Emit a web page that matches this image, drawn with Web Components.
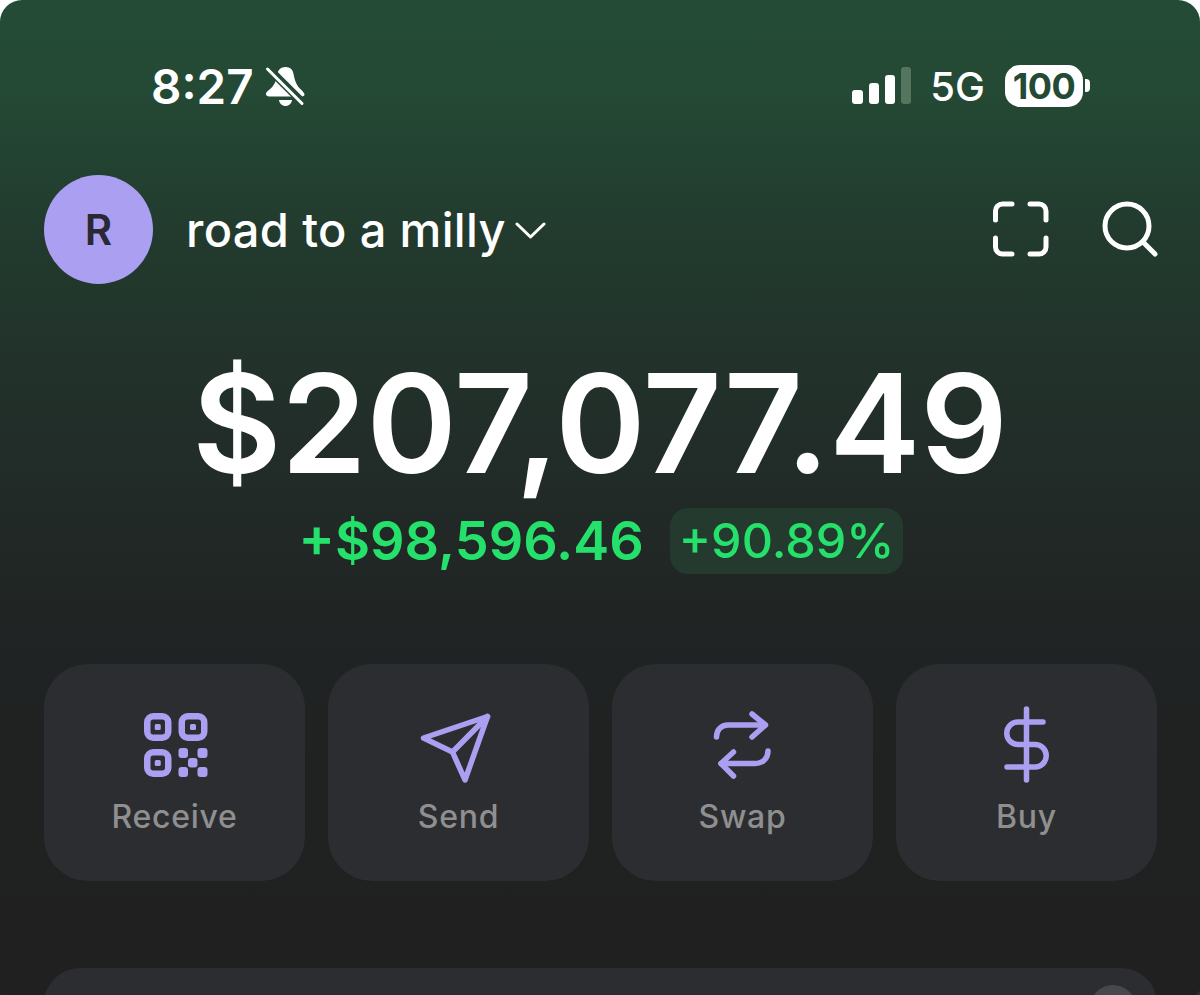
<!DOCTYPE html>
<html>
<head>
<meta charset="utf-8">
<title>road to a milly</title>
<style>
  html, body { margin: 0; padding: 0; background: #fff; }
  body { font-family: "Inter", "Liberation Sans", sans-serif; }
</style>
</head>
<body>
<wallet-screen>
  <status-bar time="8:27" network="5G" battery="100"></status-bar>
  <account-header name="road to a milly" initial="R"></account-header>
  <balance-summary total="$207,077.49" change="+$98,596.46" percent="+90.89%"></balance-summary>
  <action-row>
    <action-tile label="Receive">
      <svg slot="icon" width="80" height="80" viewBox="0 0 80 80" fill="none" stroke="currentColor" stroke-width="6.5">
        <rect x="12.25" y="11.25" width="21" height="21.5" rx="6"/>
        <rect x="46.75" y="11.25" width="22.5" height="21.5" rx="6"/>
        <rect x="12.25" y="47.25" width="21" height="21.5" rx="6"/>
        <g fill="currentColor" stroke="none">
          <rect x="19.75" y="19" width="6" height="6" rx="1.5"/>
          <rect x="55" y="19" width="6" height="6" rx="1.5"/>
          <rect x="19.75" y="55" width="6" height="6" rx="1.5"/>
          <rect x="43.5" y="43" width="9.5" height="10" rx="3"/>
          <rect x="62.5" y="43" width="10" height="10" rx="3"/>
          <rect x="53" y="53" width="9.5" height="9.5" rx="3"/>
          <rect x="43.5" y="62" width="9.5" height="10" rx="3"/>
          <rect x="62.5" y="62" width="10" height="10" rx="3"/>
        </g>
      </svg>
    </action-tile>
    <action-tile label="Send">
      <svg slot="icon" width="80" height="80" viewBox="0 0 80 80" fill="none" stroke="currentColor" stroke-width="5.5" stroke-linejoin="round" stroke-linecap="round">
        <path d="M68.500 11.500 4.500 33l29 14L46 75z"/>
        <path d="M33.500 47 68.500 11.500"/>
      </svg>
    </action-tile>
    <action-tile label="Swap">
      <svg slot="icon" width="80" height="80" viewBox="0 0 80 80" fill="none" stroke="currentColor" stroke-width="5.5" stroke-linejoin="round" stroke-linecap="round">
        <path d="M13.500 32C13.500 25 18 20 25 20H62"/>
        <path d="M49 9 62.500 20 49 32"/>
        <path d="M18 58.500H52C60 58.500 65 53 65 46"/>
        <path d="M30.500 47 18 58.500 30.500 71"/>
      </svg>
    </action-tile>
    <action-tile label="Buy">
      <svg slot="icon" width="80" height="80" viewBox="0 0 80 80" fill="none" stroke="currentColor" stroke-width="5.5" stroke-linejoin="round" stroke-linecap="round">
        <path d="M39.500 4V75"/>
        <path d="M56 17H31A11.250 11.250 0 0 0 31 39.500H48A11.250 11.250 0 0 1 48 62H20"/>
      </svg>
    </action-tile>
  </action-row>
  <peek-card></peek-card>
</wallet-screen>

<script>
class WalletScreen extends HTMLElement {
  constructor() {
    super();
    this.attachShadow({ mode: "open" });
    this.shadowRoot.innerHTML = `
      <style>
        :host {
          display: flex;
          flex-direction: column;
          width: 1200px;
          height: 995px;
          overflow: hidden;
          border-radius: 22px 22px 0 0;
          color: #fff;
          font-family: "Inter", "Liberation Sans", sans-serif;
          background: linear-gradient(180deg, #244b36 0, #244a35 80px, #223b2e 230px, #222e29 420px, #212826 540px, #202323 660px, #202020 940px);
        }
      </style>
      <slot></slot>`;
  }
}

class StatusBar extends HTMLElement {
  constructor() {
    super();
    this.attachShadow({ mode: "open" });
    this.shadowRoot.innerHTML = `
      <style>
        :host { flex: none; display: flex; align-items: center; height: 175px; padding: 0 110px 1px 151px; box-sizing: border-box; }
        .time { font-size: 47.5px; font-weight: 600; line-height: 1; }
        .bell { margin-left: 11px; display: block; }
        .right { margin-left: auto; display: flex; align-items: center; }
        .bars { display: flex; align-items: flex-end; gap: 6px; height: 37px; margin-bottom: 3px; }
        .bars i { display: block; width: 10.25px; background: #fff; border-radius: 3px; }
        .bars i:nth-child(1) { height: 14px; }
        .bars i:nth-child(2) { height: 21px; }
        .bars i:nth-child(3) { height: 29px; }
        .bars i:nth-child(4) { height: 37px; background: #55755f; }
        .net { margin-left: 19px; font-size: 40px; font-weight: 500; line-height: 1; }
        .battery { margin-left: 20px; margin-bottom: 3px; display: flex; align-items: center; }
        .cell { width: 78px; height: 42px; border-radius: 15px; background: #fff; color: #244a35; font-size: 36px; font-weight: 700; line-height: 42px; text-align: center; letter-spacing: -.5px; }
        .nub { width: 5px; height: 13px; margin-left: 2px; background: #fff; border-radius: 0 4px 4px 0; }
      </style>
      <span class="time">${this.getAttribute("time")}</span>
      <svg class="bell" width="40" height="42" viewBox="0 0 40 42">
        <path fill="#fff" d="M20.500 1C15.500 1 13 4 12.500 8 11 15 10 19 4 24 1.500 26 .5 27 1 28.500 1.500 30 3 30.500 5 30.500H36C38 30.500 39.500 30 39.500 28.500 39.500 27 38 26 36.500 24 31 19 30 15 28.500 8 28 4 25.500 1 20.500 1Z"/>
        <path fill="#fff" d="M14 34H27C26.500 37.500 24 40 20.500 40 17 40 14.500 37.500 14 34Z"/>
        <path d="M1 0 38 37" stroke="#244a35" stroke-width="8"/>
        <path d="M2.500 3 37 37.500" stroke="#fff" stroke-width="3" stroke-linecap="round"/>
      </svg>
      <div class="right">
        <div class="bars"><i></i><i></i><i></i><i></i></div>
        <span class="net">${this.getAttribute("network")}</span>
        <div class="battery"><div class="cell">${this.getAttribute("battery")}</div><div class="nub"></div></div>
      </div>`;
  }
}

class AccountHeader extends HTMLElement {
  constructor() {
    super();
    this.attachShadow({ mode: "open" });
    this.shadowRoot.innerHTML = `
      <style>
        :host { flex: none; display: flex; align-items: center; height: 109px; padding: 0 42px 0 44px; }
        .avatar { width: 109px; height: 109px; border-radius: 50%; background: #ab9ff2; color: #2a2833; display: flex; align-items: center; justify-content: center; font-size: 42px; font-weight: 600; }
        .name { margin-left: 33px; font-size: 47px; font-weight: 500; letter-spacing: .35px; line-height: 1; }
        .chev { margin-left: 9px; margin-top: 3px; display: block; }
        .tools { margin-left: auto; margin-bottom: 2px; display: flex; align-items: center; gap: 53px; }
        svg { display: block; }
      </style>
      <div class="avatar">${this.getAttribute("initial")}</div>
      <span class="name">${this.getAttribute("name")}</span>
      <svg class="chev" width="32" height="18" viewBox="0 0 32 18" fill="none" stroke="#fff" stroke-width="3" stroke-linecap="round" stroke-linejoin="round"><path d="M2 2 15.500 15 29 2"/></svg>
      <div class="tools">
        <svg width="56" height="56" viewBox="0 0 56 56" fill="none" stroke="#fff" stroke-width="5" stroke-linecap="round">
          <path d="M2.500 19V10A7 7 0 0 1 9.500 3H19"/>
          <path d="M37 3H46A7 7 0 0 1 53 10V19"/>
          <path d="M2.500 37V46A7 7 0 0 0 9.500 53H19"/>
          <path d="M37 53H46A7 7 0 0 0 53 46V37"/>
        </svg>
        <svg width="56" height="56" viewBox="0 0 56 56" fill="none" stroke="#fff" stroke-width="5" stroke-linecap="round">
          <circle cx="25" cy="25" r="22"/>
          <path d="M41 41 53 53"/>
        </svg>
      </div>`;
  }
}

class BalanceSummary extends HTMLElement {
  constructor() {
    super();
    this.attachShadow({ mode: "open" });
    this.shadowRoot.innerHTML = `
      <style>
        :host { flex: none; display: flex; flex-direction: column; align-items: center; height: 380px; padding-top: 71px; box-sizing: border-box; }
        .total { font-size: 137px; font-weight: 600; line-height: 136px; letter-spacing: -.2px; }
        .row { display: flex; align-items: center; gap: 26px; margin: 17px 0 0 2px; color: #26e06c; }
        .change { font-size: 54px; font-weight: 600; line-height: 66px; }
        .pct { font-size: 48.5px; font-weight: 500; line-height: 66px; padding: 0 9px; border-radius: 18px; background: #243a2e; }
      </style>
      <div class="total">${this.getAttribute("total")}</div>
      <div class="row">
        <span class="change">${this.getAttribute("change")}</span>
        <span class="pct">${this.getAttribute("percent")}</span>
      </div>`;
  }
}

class ActionRow extends HTMLElement {
  constructor() {
    super();
    this.attachShadow({ mode: "open" });
    this.shadowRoot.innerHTML = `
      <style>
        :host { flex: none; display: grid; grid-template-columns: repeat(4, 261px); gap: 23px; padding: 0 44px; }
      </style>
      <slot></slot>`;
  }
}

class ActionTile extends HTMLElement {
  constructor() {
    super();
    this.attachShadow({ mode: "open" });
    this.shadowRoot.innerHTML = `
      <style>
        :host { display: flex; flex-direction: column; align-items: center; height: 217px; padding-top: 41px; box-sizing: border-box; border-radius: 44px; background: #2c2d31; color: #ab9ff2; }
        ::slotted(svg) { display: block; }
        .label { margin-top: 12px; font-size: 32px; font-weight: 500; line-height: 40px; color: #8f8f90; letter-spacing: .7px; }
      </style>
      <slot name="icon"></slot>
      <span class="label">${this.getAttribute("label")}</span>`;
  }
}

class PeekCard extends HTMLElement {
  constructor() {
    super();
    this.attachShadow({ mode: "open" });
    this.shadowRoot.innerHTML = `
      <style>
        :host { flex: none; display: block; position: relative; height: 120px; margin: 87px 43px 0 44px; border-radius: 36px; background: #2c2d31; }
        .close { position: absolute; top: 17px; left: 1046px; width: 46px; height: 46px; border-radius: 50%; background: #47484b; }
        .edge { position: absolute; top: 17px; width: 46px; height: 46px; border-radius: 50%; background: #2c2d31; }
        .edge.l { left: -85px; }
        .edge.r { left: 1148px; }
      </style>
      <div class="edge l"></div>
      <div class="edge r"></div>
      <div class="close"></div>`;
  }
}

customElements.define("wallet-screen", WalletScreen);
customElements.define("status-bar", StatusBar);
customElements.define("account-header", AccountHeader);
customElements.define("balance-summary", BalanceSummary);
customElements.define("action-row", ActionRow);
customElements.define("action-tile", ActionTile);
customElements.define("peek-card", PeekCard);
</script>
</body>
</html>
